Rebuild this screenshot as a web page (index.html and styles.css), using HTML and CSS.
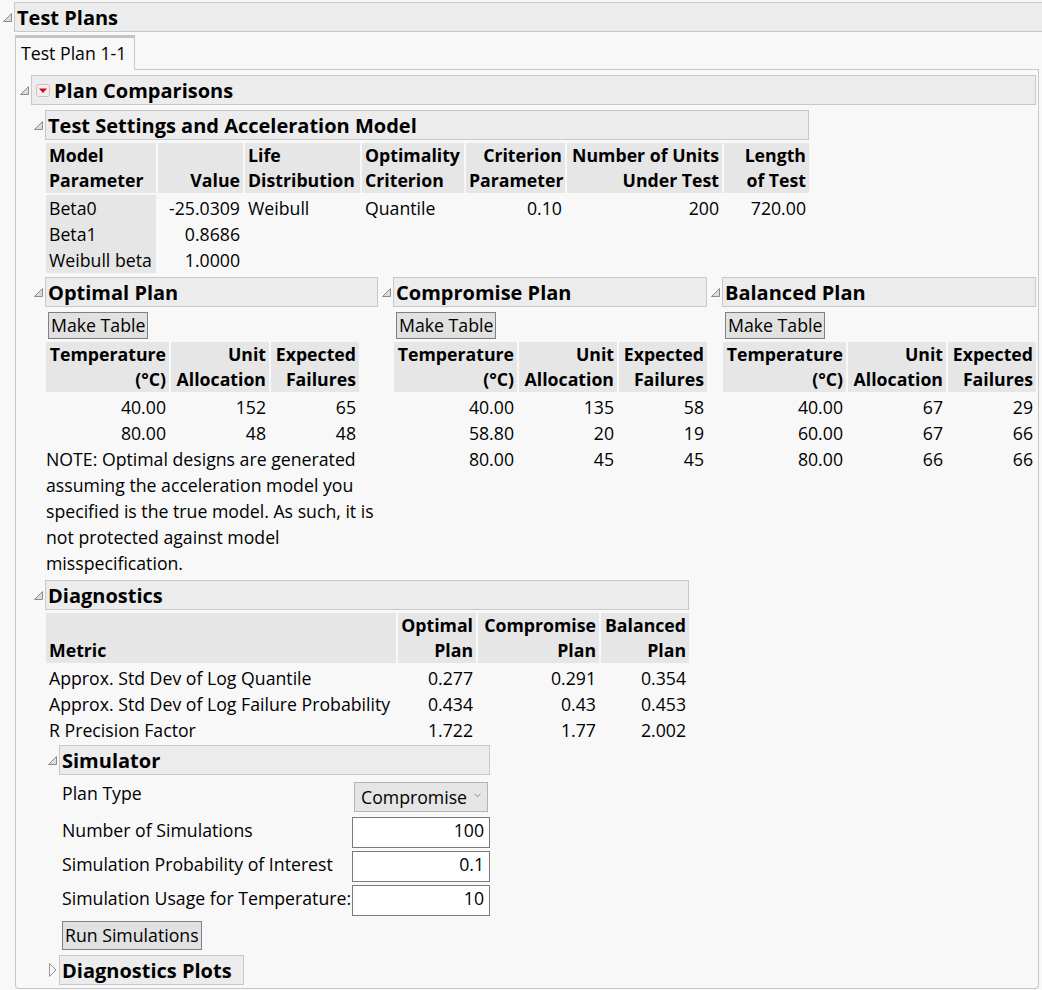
FILE: index.html
```html
<!DOCTYPE html>
<html>
<head>
<meta charset="utf-8">
<title>Test Plans</title>
<link rel="stylesheet" href="styles.css">
</head>
<body>
<div class="outline top">
  <div class="tri-cell"><svg class="tri" width="9" height="9" viewBox="0 0 9 9"><polygon points="8.5,0.5 8.5,8.5 0.5,8.5" fill="#dcdcdc" stroke="#8c8c8c"/></svg></div>
  <div class="ol-title">Test Plans</div>
  <div class="ol-body">
    <div class="tabbox">
      <div class="tabstrip"><div class="tab">Test Plan 1-1</div><div class="tab-fill"></div></div>
      <div class="panel">
        <div class="outline">
          <div class="tri-cell"><svg class="tri" width="9" height="9" viewBox="0 0 9 9"><polygon points="8.5,0.5 8.5,8.5 0.5,8.5" fill="#dcdcdc" stroke="#8c8c8c"/></svg></div>
          <div class="ol-title"><svg class="menu-ic" width="14" height="13" viewBox="0 0 14 13"><rect x="0.5" y="0.5" width="13" height="12" rx="2.5" fill="#f3eeee" stroke="#cdbfbf"/><polygon points="3,4.5 11,4.5 7,9" fill="#e0001a"/></svg>Plan Comparisons</div>
          <div class="ol-body">

            <div class="outline sub">
              <div class="tri-cell"><svg class="tri" width="9" height="9" viewBox="0 0 9 9"><polygon points="8.5,0.5 8.5,8.5 0.5,8.5" fill="#dcdcdc" stroke="#8c8c8c"/></svg></div>
              <div class="ol-title">Test Settings and Acceleration Model</div>
              <div class="ol-body">
                <table class="grid t-settings">
                  <thead>
                    <tr>
                      <th class="l ts1">Model<br>Parameter</th>
                      <th class="r ts2">Value</th>
                      <th class="l ts3">Life<br>Distribution</th>
                      <th class="l ts4">Optimality<br>Criterion</th>
                      <th class="r ts5">Criterion<br>Parameter</th>
                      <th class="r ts6">Number of Units<br>Under Test</th>
                      <th class="r ts7">Length<br>of Test</th>
                    </tr>
                  </thead>
                  <tbody>
                    <tr><td class="l lbl">Beta0</td><td class="r">-25.0309</td><td class="l">Weibull</td><td class="l">Quantile</td><td class="r">0.10</td><td class="r">200</td><td class="r">720.00</td></tr>
                    <tr><td class="l lbl">Beta1</td><td class="r">0.8686</td><td></td><td></td><td></td><td></td><td></td></tr>
                    <tr><td class="l lbl">Weibull beta</td><td class="r">1.0000</td><td></td><td></td><td></td><td></td><td></td></tr>
                  </tbody>
                </table>
              </div>
            </div>

            <div class="plans">
              <div class="outline plan-opt">
                <div class="tri-cell"><svg class="tri" width="9" height="9" viewBox="0 0 9 9"><polygon points="8.5,0.5 8.5,8.5 0.5,8.5" fill="#dcdcdc" stroke="#8c8c8c"/></svg></div>
                <div class="ol-title">Optimal Plan</div>
                <div class="ol-body">
                  <button class="btn make">Make Table</button>
                  <table class="grid t-plan">
                    <thead><tr><th class="r pc1">Temperature<br>(°C)</th><th class="r pc2">Unit<br>Allocation</th><th class="r pc3">Expected<br>Failures</th></tr></thead>
                    <tbody>
                      <tr><td class="r">40.00</td><td class="r">152</td><td class="r">65</td></tr>
                      <tr><td class="r">80.00</td><td class="r">48</td><td class="r">48</td></tr>
                    </tbody>
                  </table>
                  <p class="note">NOTE: Optimal designs are generated<br>assuming the acceleration model you<br>specified is the true model. As such, it is<br>not protected against model<br>misspecification.</p>
                </div>
              </div>

              <div class="outline plan-cmp">
                <div class="tri-cell"><svg class="tri" width="9" height="9" viewBox="0 0 9 9"><polygon points="8.5,0.5 8.5,8.5 0.5,8.5" fill="#dcdcdc" stroke="#8c8c8c"/></svg></div>
                <div class="ol-title">Compromise Plan</div>
                <div class="ol-body">
                  <button class="btn make">Make Table</button>
                  <table class="grid t-plan">
                    <thead><tr><th class="r pc1">Temperature<br>(°C)</th><th class="r pc2">Unit<br>Allocation</th><th class="r pc3">Expected<br>Failures</th></tr></thead>
                    <tbody>
                      <tr><td class="r">40.00</td><td class="r">135</td><td class="r">58</td></tr>
                      <tr><td class="r">58.80</td><td class="r">20</td><td class="r">19</td></tr>
                      <tr><td class="r">80.00</td><td class="r">45</td><td class="r">45</td></tr>
                    </tbody>
                  </table>
                </div>
              </div>

              <div class="outline plan-cmp">
                <div class="tri-cell"><svg class="tri" width="9" height="9" viewBox="0 0 9 9"><polygon points="8.5,0.5 8.5,8.5 0.5,8.5" fill="#dcdcdc" stroke="#8c8c8c"/></svg></div>
                <div class="ol-title">Balanced Plan</div>
                <div class="ol-body">
                  <button class="btn make">Make Table</button>
                  <table class="grid t-plan">
                    <thead><tr><th class="r pc1">Temperature<br>(°C)</th><th class="r pc2">Unit<br>Allocation</th><th class="r pc3">Expected<br>Failures</th></tr></thead>
                    <tbody>
                      <tr><td class="r">40.00</td><td class="r">67</td><td class="r">29</td></tr>
                      <tr><td class="r">60.00</td><td class="r">67</td><td class="r">66</td></tr>
                      <tr><td class="r">80.00</td><td class="r">66</td><td class="r">66</td></tr>
                    </tbody>
                  </table>
                </div>
              </div>
            </div>

            <div class="outline diag">
              <div class="tri-cell"><svg class="tri" width="9" height="9" viewBox="0 0 9 9"><polygon points="8.5,0.5 8.5,8.5 0.5,8.5" fill="#dcdcdc" stroke="#8c8c8c"/></svg></div>
              <div class="ol-title">Diagnostics</div>
              <div class="ol-body">
                <table class="grid t-diag">
                  <thead>
                    <tr><th class="l dc1">Metric</th><th class="r dc2">Optimal<br>Plan</th><th class="r dc3">Compromise<br>Plan</th><th class="r dc4">Balanced<br>Plan</th></tr>
                  </thead>
                  <tbody>
                    <tr><td class="l">Approx. Std Dev of Log Quantile</td><td class="r">0.277</td><td class="r">0.291</td><td class="r">0.354</td></tr>
                    <tr><td class="l">Approx. Std Dev of Log Failure Probability</td><td class="r">0.434</td><td class="r">0.43</td><td class="r">0.453</td></tr>
                    <tr><td class="l">R Precision Factor</td><td class="r">1.722</td><td class="r">1.77</td><td class="r">2.002</td></tr>
                  </tbody>
                </table>

                <div class="outline sub">
                  <div class="tri-cell"><svg class="tri" width="9" height="9" viewBox="0 0 9 9"><polygon points="8.5,0.5 8.5,8.5 0.5,8.5" fill="#dcdcdc" stroke="#8c8c8c"/></svg></div>
                  <div class="ol-title">Simulator</div>
                  <div class="ol-body">
                    <div class="sim-form">
                      <div class="lab">Plan Type</div>
                      <div class="select"><span>Compromise</span><svg class="chev" width="7" height="5" viewBox="0 0 7 5"><polyline points="0.5,0.8 3.5,3.8 6.5,0.8" fill="none" stroke="#8a8a8a" stroke-width="1"/></svg></div>
                      <div class="lab">Number of Simulations</div>
                      <div class="field">100</div>
                      <div class="lab">Simulation Probability of Interest</div>
                      <div class="field">0.1</div>
                      <div class="lab">Simulation Usage for Temperature:</div>
                      <div class="field">10</div>
                    </div>
                    <button class="btn run">Run Simulations</button>
                  </div>
                </div>

                <div class="outline closed">
                  <div class="tri-cell"><svg class="tri" width="8" height="14" viewBox="0 0 8 14"><polygon points="0.5,0.5 7,7 0.5,13.5" fill="#f8f8f8" stroke="#9a9a9a"/></svg></div>
                  <div class="ol-title dp-title">Diagnostics Plots</div>
                </div>
              </div>
            </div>

          </div>
        </div>
      </div>
    </div>
  </div>
</div>
</body>
</html>
```
FILE: styles.css
```css
* { box-sizing: border-box; }

html, body {
  margin: 0;
  background: #f8f8f8;
  overflow: hidden;
}

body {
  padding: 2px 0 0 1px;
  font-family: "Open Sans", "Noto Sans", sans-serif;
  font-size: 17.7px;
  line-height: 26px;
  color: #000;
}

/* Outline (disclosure) boxes */
.outline {
  display: grid;
  grid-template-columns: 13px auto;
  width: fit-content;
}
.outline.top { width: 1060px; }

.tri-cell {
  display: flex;
  align-items: center;
  justify-content: flex-end;
  padding-right: 2px;
}

.ol-title {
  display: flex;
  align-items: center;
  height: 30px;
  border: 1px solid #c8c8c8;
  background: #ececec;
  padding: 2px 0 0 2px;
  font-size: 20px;
  font-weight: 700;
  line-height: 26px;
  white-space: nowrap;
}

.menu-ic {
  flex: none;
  margin: -2px 4px 0 2px;
}

.ol-body {
  grid-column: 2;
  padding: 3px 0 0 1px;
}

.ol-body > .outline.sub { margin-top: 2px; }
.outline.diag { margin-top: 4px; }
.outline.closed { margin-top: 5px; }
.dp-title { width: 185px; }

/* Tabs */
.tabbox { width: fit-content; }
.tabstrip { display: flex; }
.tab {
  width: 120px;
  height: 35px;
  border: 1px solid #c8c8c8;
  border-top: 3px solid #c4c4c4;
  border-bottom: none;
  padding: 0 5px;
  line-height: 31px;
  white-space: nowrap;
}
.tab-fill {
  flex: 1;
  border-bottom: 1px solid #c8c8c8;
}
.panel {
  border: 1px solid #c8c8c8;
  border-top: none;
  border-radius: 0 0 4px 4px;
  padding: 5px 2px 3px 2px;
}

/* Tables */
.grid {
  border-collapse: separate;
  border-spacing: 0;
  table-layout: fixed;
}
.grid th, .grid td {
  padding: 0 3px;
  white-space: nowrap;
}
.grid th {
  background: #e6e6e6;
  font-weight: 700;
  line-height: 25px;
  vertical-align: bottom;
  border-bottom: 2px solid #f8f8f8;
}
.grid th + th, .grid td + td { border-left: 2px solid #f8f8f8; }
.grid td { height: 26px; line-height: 26px; }
.grid .l { text-align: left; }
.grid .r { text-align: right; }
.grid .lbl { background: #e6e6e6; }

.t-settings { width: 763px; }
.ts1 { width: 110px; }
.ts2 { width: 87px; }
.ts3 { width: 117px; }
.ts4 { width: 104px; }
.ts5 { width: 101px; }
.ts6 { width: 157px; }
.ts7 { width: 87px; }

.t-plan { width: 313px; margin-top: 3px; }
.pc1 { width: 123px; }
.pc2 { width: 100px; }
.pc3 { width: 90px; }

.t-diag { width: 643px; }
.dc1 { width: 350px; }
.dc2 { width: 80px; }
.dc3 { width: 123px; }
.dc4 { width: 90px; }

/* Plans row */
.plans {
  display: flex;
  gap: 2px;
  margin-top: 4px;
  align-items: flex-start;
}
.plan-opt { width: 346px; }
.plan-cmp { width: 327px; }

.note {
  margin: 0;
  white-space: nowrap;
  line-height: 26px;
}

/* Buttons */
.btn {
  display: block;
  font: inherit;
  color: #000;
  background: #e1e1e1;
  border: 1px solid #808080;
  border-radius: 0;
  margin: 0;
  white-space: nowrap;
}
.btn.make {
  height: 27px;
  line-height: 25px;
  padding: 0 2px;
  margin: 2px 0 0 2px;
}
.btn.run {
  height: 29px;
  line-height: 27px;
  padding: 0 2px;
  margin: 5px 0 0 2px;
}

/* Simulator form */
.sim-form {
  display: grid;
  grid-template-columns: 292px 138px;
  row-gap: 3px;
  margin-top: 2px;
}
.sim-form .lab {
  align-self: start;
  padding-left: 2px;
  white-space: nowrap;
  line-height: 26px;
}
.select {
  display: flex;
  align-items: center;
  justify-content: space-between;
  height: 30px;
  margin: 2px;
  padding: 0 6px 0 6px;
  background: #e5e5e5;
  border: 1px solid #b4b4b4;
}
.chev { flex: none; margin-top: -3px; }
.field {
  height: 31px;
  background: #fff;
  border: 1px solid #7a7a7a;
  text-align: right;
  padding-right: 5px;
  line-height: 25px;
}
```
